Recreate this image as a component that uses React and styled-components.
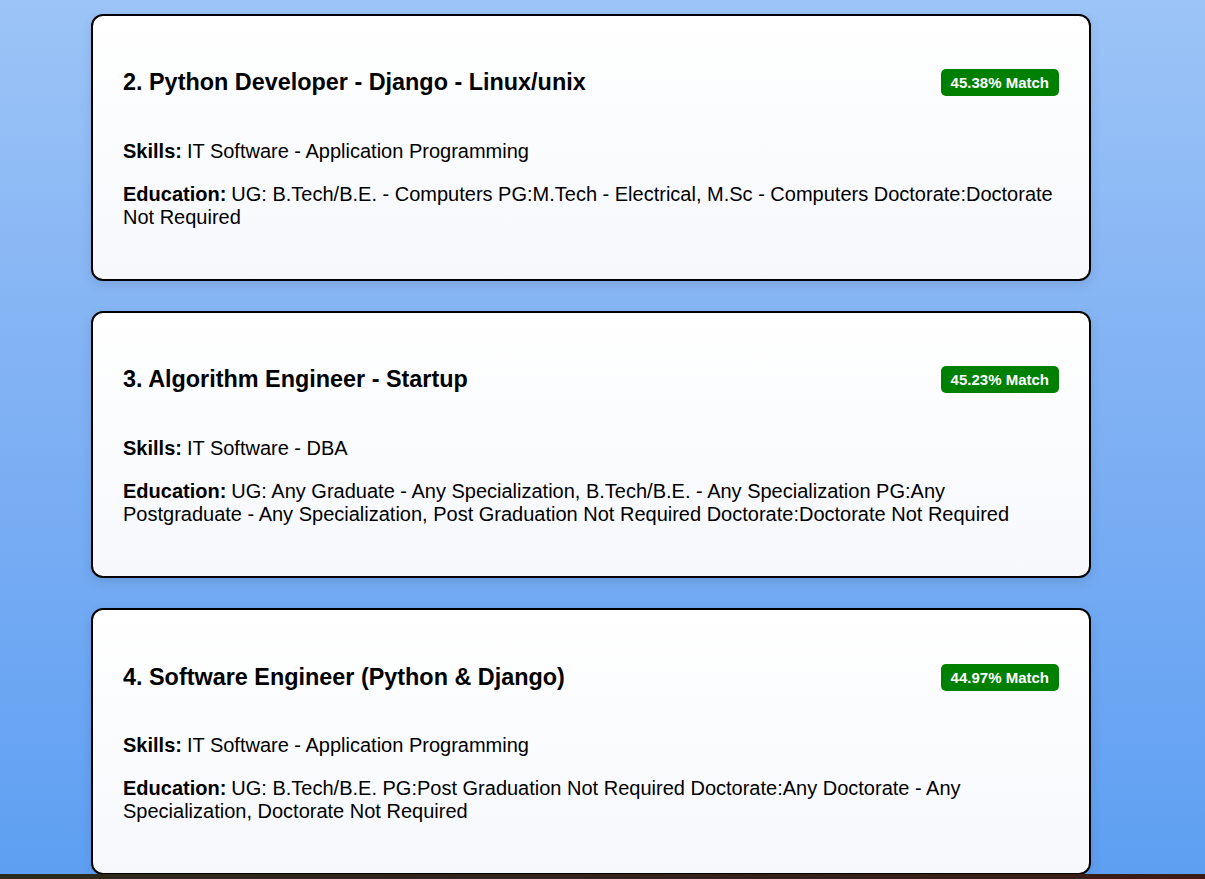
import styled, { createGlobalStyle } from "styled-components";

const GlobalStyle = createGlobalStyle`
  html, body {
    margin: 0;
    padding: 0;
  }
  body {
    font-family: "Liberation Sans", Arial, sans-serif;
    background: linear-gradient(180deg, #9cc4f7 0%, #83b3f4 40%, #5e9ff2 100%);
    background-attachment: fixed;
    min-height: 100vh;
  }
`;

const Page = styled.div`
  padding: 14px 114px 40px 91px;
`;

const Card = styled.div`
  max-width: 1000px;
  box-sizing: border-box;
  margin-bottom: 30.3px;
  padding: 30px;
  border: 2px solid #000;
  border-radius: 12px;
  background: linear-gradient(180deg, #ffffff 0%, #f6f8fc 100%);
  box-shadow: 0 4px 12px rgba(0, 0, 0, 0.1);
  font-size: 20px;
  color: #000;
`;

const Header = styled.div`
  display: flex;
  align-items: center;
  justify-content: space-between;
`;

const Title = styled.h3`
  font-size: 1.17em;
  font-weight: bold;
  margin: 1em 0;
`;

const Badge = styled.span`
  background: green;
  color: #fff;
  font-size: 15px;
  font-weight: bold;
  padding: 5px 10px;
  border-radius: 5px;
  white-space: nowrap;
`;

const Detail = styled.p`
  margin: 20px 0;
  line-height: normal;
`;

const Label = styled.strong`
  font-weight: bold;
  margin-right: 0.25em;
`;

const Footer = styled.div`
  position: fixed;
  left: 0;
  right: 0;
  bottom: 0;
  height: 5px;
  background: linear-gradient(90deg, #2b2a1d 0%, #33221a 50%, #3b1b16 100%);
`;

const jobs = [
  {
    rank: 2,
    title: "Python Developer - Django - Linux/unix",
    match: "45.38",
    skills: "IT Software - Application Programming",
    education:
      "UG: B.Tech/B.E. - Computers PG:M.Tech - Electrical, M.Sc - Computers Doctorate:Doctorate Not Required",
  },
  {
    rank: 3,
    title: "Algorithm Engineer - Startup",
    match: "45.23",
    skills: "IT Software - DBA",
    education:
      "UG: Any Graduate - Any Specialization, B.Tech/B.E. - Any Specialization PG:Any Postgraduate - Any Specialization, Post Graduation Not Required Doctorate:Doctorate Not Required",
  },
  {
    rank: 4,
    title: "Software Engineer (Python & Django)",
    match: "44.97",
    skills: "IT Software - Application Programming",
    education:
      "UG: B.Tech/B.E. PG:Post Graduation Not Required Doctorate:Any Doctorate - Any Specialization, Doctorate Not Required",
  },
];

const App = () => {
  return (
    <>
      <GlobalStyle />
      <Page>
        {jobs.map((job) => (
          <Card key={job.rank}>
            <Header>
              <Title>
                {job.rank}. {job.title}
              </Title>
              <Badge>{job.match}% Match</Badge>
            </Header>
            <Detail>
              <Label>Skills:</Label>
              {job.skills}
            </Detail>
            <Detail>
              <Label>Education:</Label>
              {job.education}
            </Detail>
          </Card>
        ))}
      </Page>
      <Footer />
    </>
  );
};

export default App;
